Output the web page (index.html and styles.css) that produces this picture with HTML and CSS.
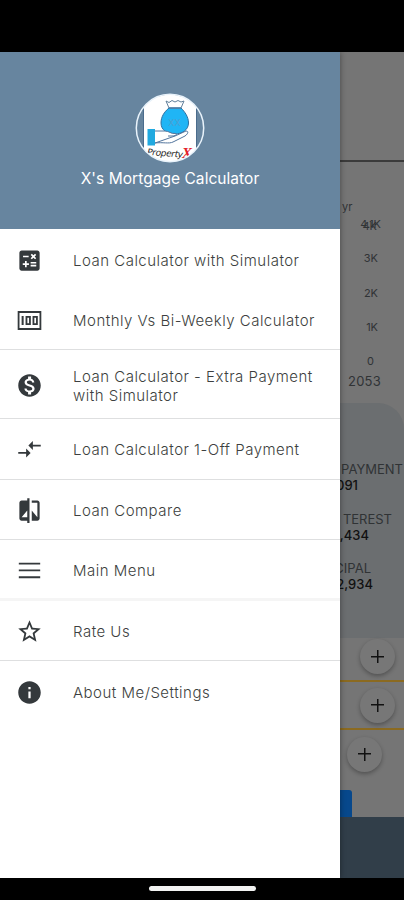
FILE: index.html
```html
<!DOCTYPE html>
<html lang="en">
<head>
    <meta charset="UTF-8">
    <meta name="viewport" content="width=device-width, initial-scale=1.0">
    <title>X's Mortgage Calculator</title>
    <link rel="stylesheet" href="styles.css">
</head>
<body>
    <div class="status-bar"></div>

    <div class="screen">
        <nav class="drawer">
            <div class="drawer-header">
                <svg class="logo" viewBox="0 0 70 70">
                    <defs>
                        <clipPath id="round"><circle cx="35" cy="35" r="33.5"/></clipPath>
                    </defs>
                    <g clip-path="url(#round)">
                        <rect x="9" width="52" height="70" fill="#fff"/>
                        <rect y="57" width="70" height="13" fill="#fff"/>
                        <path d="M8.5 10v47M61.5 10v47" stroke="#4b6c8c" stroke-width="1"/>
                        <path d="M34 15 C29 19 26 24 26 30 C26 37 32 41 39.500 41 C47 41 53.500 37 53.500 30 C53.500 24 50 19 46 15Z" fill="#20b5f5" stroke="#2f6f9f" stroke-width="1"/>
                        <path d="M34 15 L31 8 L34 9.500 L37 7.500 L40 9 L43 7.500 L46 9 L49 8 L46 15Z" fill="#fff" stroke="#62809b" stroke-width="1"/>
                        <path d="M34 15h12" stroke="#4b7fa8" stroke-width="1.500"/>
                        <rect x="12.500" y="36" width="7.500" height="16.500" fill="#20a9e0"/>
                        <path d="M20 38 H30 C34 38 36 41 40 40.500 C43 41 41 43 37 43 H33 M40 43 L51 38 C54 38 53 41 50 43 L38 49 C34 51 28 49 20 50Z" fill="#fff" stroke="#52749c" stroke-width="1"/>
                        <text x="39.500" y="33" text-anchor="middle" class="logo-bag">XX</text>
                        <text x="12" y="62" class="logo-name" textLength="36" transform="rotate(4 12 62)">Property</text>
                        <text x="47" y="65" class="logo-x">X</text>
                    </g>
                    <circle cx="35" cy="35" r="33.700" fill="none" stroke="#e9f3fb" stroke-width="1.500"/>
                </svg>
                <h1>X's Mortgage Calculator</h1>
            </div>

            <ul class="menu">
                <li>
                    <svg viewBox="0 0 24 24"><path fill-rule="evenodd" d="M19 3H5c-1.100 0-2 .9-2 2v14c0 1.100.9 2 2 2h14c1.100 0 2-.9 2-2V5c0-1.100-.9-2-2-2zm-5.970 4.060 1.060-1.060 1.410 1.410 1.410-1.410 1.060 1.060-1.410 1.410 1.410 1.420-1.060 1.060-1.410-1.410-1.410 1.410-1.060-1.060 1.410-1.420zM6.250 7.720h5v1.500h-5zM11.500 16h-2v2H8v-2H6v-1.500h2v-2h1.500v2h2zm6.500 1.250h-5v-1.500h5zm0-2.500h-5v-1.500h5z"/></svg>
                    <span>Loan Calculator with Simulator</span>
                </li>
                <li class="divided">
                    <svg viewBox="0 0 24 24"><path fill-rule="evenodd" d="M1.500 3.500v17h21v-17zm1.600 1.800h17.800v13.400H3.100z"/><path fill-rule="evenodd" d="M5 8h1.800v8H5zM8.500 8h4.700v8H8.500zm1.600 1.600v4.800h1.500V9.600zM14.700 8h4.700v8h-4.700zm1.600 1.600v4.800h1.500V9.600z"/></svg>
                    <span>Monthly Vs Bi-Weekly Calculator</span>
                </li>
                <li class="divided tall">
                    <svg viewBox="0 0 24 24"><path d="M12 2C6.480 2 2 6.480 2 12s4.480 10 10 10 10-4.480 10-10S17.520 2 12 2zm1.410 16.090V20h-2.670v-1.930c-1.710-.36-3.160-1.460-3.270-3.400h1.960c.1 1.050.82 1.870 2.650 1.870 1.960 0 2.400-.98 2.400-1.590 0-.83-.44-1.610-2.670-2.140-2.480-.6-4.180-1.620-4.180-3.670 0-1.720 1.390-2.840 3.110-3.210V4h2.670v1.950c1.860.45 2.790 1.860 2.850 3.390H14.300c-.05-1.110-.64-1.870-2.220-1.870-1.500 0-2.400.68-2.400 1.640 0 .84.65 1.390 2.670 1.910s4.180 1.390 4.180 3.910c-.01 1.830-1.380 2.830-3.120 3.160z" stroke="#34393c" stroke-width="0"/></svg>
                    <span>Loan Calculator - Extra Payment with Simulator</span>
                </li>
                <li class="divided">
                    <svg viewBox="0 0 24 24"><path d="M9.010 14.200H2v1.600h7.010V19L13 15l-3.990-4zM14.990 12.500V9.300H22V7.700h-7.010v-3.200L11 8.500z"/></svg>
                    <span>Loan Calculator 1-Off Payment</span>
                </li>
                <li class="divided">
                    <svg viewBox="0 0 24 24"><path d="M10 3H5c-1.100 0-2 .9-2 2v14c0 1.100.9 2 2 2h5v2h2V1h-2zm0 15H5l5-6zM19 3h-5v2h5v13l-5-6v9h5c1.100 0 2-.9 2-2V5c0-1.100-.9-2-2-2z"/></svg>
                    <span>Loan Compare</span>
                </li>
                <li class="divided soft">
                    <svg viewBox="0 0 24 24"><path d="M2.500 5h19v1.700h-19zM2.500 11.100h19v1.600h-19zM2.500 17.100h19v1.700h-19z"/></svg>
                    <span>Main Menu</span>
                </li>
                <li class="divided">
                    <svg viewBox="0 0 24 24"><path d="m22 9.240-7.190-.62L12 2 9.190 8.630 2 9.240l5.460 4.730L5.820 21 12 17.270 18.180 21l-1.630-7.030zM12 15.400l-3.760 2.270 1-4.280-3.320-2.880 4.380-.38L12 6.100l1.710 4.040 4.380.38-3.320 2.880 1 4.280z"/></svg>
                    <span>Rate Us</span>
                </li>
                <li>
                    <svg viewBox="0 0 24 24"><path d="M12 2C6.480 2 2 6.480 2 12s4.480 10 10 10 10-4.480 10-10S17.520 2 12 2zm1 15h-2v-6h2zm0-8h-2V7h2z"/></svg>
                    <span>About Me/Settings</span>
                </li>
            </ul>
        </nav>

        <main class="page">
            <div class="page-top"></div>
            <div class="chart">
                <span class="term">yr</span>
                <div class="axis">
                    <span class="peak">4.1K<b>4K</b></span>
                    <span>3K</span>
                    <span>2K</span>
                    <span>1K</span>
                    <span class="zero">0</span>
                </div>
                <span class="year">2053</span>
            </div>
            <div class="summary">
                <dl class="payment"><dt>PAYMENT</dt><dd>091</dd></dl>
                <dl class="interest"><dt>TEREST</dt><dd>,434</dd></dl>
                <dl class="principal"><dt>CIPAL</dt><dd>2,934</dd></dl>
            </div>
            <div class="adjust lined"><button class="plus"></button></div>
            <div class="adjust lined"><button class="plus"></button></div>
            <div class="adjust last"><button class="plus"></button></div>
            <div class="blue-btn"></div>
            <div class="page-footer"></div>
        </main>
    </div>

    <div class="nav-bar"><div class="handle"></div></div>
</body>
</html>
```

FILE: styles.css
```css
* {
    margin: 0;
    padding: 0;
    box-sizing: border-box;
}

body {
    width: 404px;
    height: 900px;
    display: flex;
    flex-direction: column;
    overflow: hidden;
    background: #000;
    font-family: Inter, Roboto, sans-serif;
}

.status-bar {
    height: 52px;
}

.screen {
    height: 826px;
    display: flex;
    overflow: hidden;
}

/* Drawer */
.drawer {
    width: 340px;
    flex-shrink: 0;
    background: #fff;
    box-shadow: 0 0 6px rgba(0,0,0,0.4);
    z-index: 1;
}

.drawer-header {
    height: 177px;
    background: #67859f;
    color: #fff;
    display: flex;
    flex-direction: column;
    align-items: center;
    padding-top: 41px;
}

.logo {
    width: 70px;
    height: 70px;
}

.logo-bag {
    font-size: 9px;
    fill: #4e9ed0;
}

.logo-name {
    font: italic 9px "DejaVu Sans", sans-serif;
    fill: #222;
}

.logo-x {
    font: italic bold 15px "Liberation Serif", serif;
    fill: #e3202b;
}

.drawer-header h1 {
    font-size: 15.500px;
    font-weight: 400;
    line-height: 20px;
    letter-spacing: 0.050px;
    margin-top: 6px;
}

.menu {
    list-style: none;
}

.menu li {
    height: 60.500px;
    display: flex;
    align-items: center;
    padding: 2px 20px 0 16px;
    color: #3d3f40;
    font-size: 15px;
    font-weight: 300;
    line-height: 19px;
    letter-spacing: 0.490px;
}

.menu li.divided {
    border-bottom: 1px solid #dedfe0;
}

.menu li.tall {
    height: 69px;
    padding-top: 3px;
}

.menu li.soft {
    border-bottom: 3px solid #f5f5f5;
    padding-top: 4px;
}

.menu svg {
    width: 27px;
    height: 27px;
    margin-right: 30px;
    flex-shrink: 0;
    fill: #34393c;
}

/* Dimmed page behind the drawer */
.page {
    width: 64px;
    background: #757575;
    color: #303335;
    overflow: hidden;
}

.page-top {
    height: 110px;
    border-bottom: 2px solid #3b3b3b;
}

.chart {
    height: 241px;
    padding-top: 38px;
    display: flex;
    flex-direction: column;
}

.term {
    font-size: 11px;
    line-height: 14px;
    padding-left: 2px;
}

.axis {
    display: flex;
    flex-direction: column;
    width: 38px;
    padding-top: 3px;
    font-size: 11px;
}

.axis span {
    height: 34.300px;
    line-height: 14px;
    text-align: right;
}

.axis .peak {
    position: relative;
    width: 41px;
}

.axis .peak b {
    position: absolute;
    right: 4px;
    top: 2px;
    font-weight: 400;
}

.axis .zero {
    height: 17px;
    padding-right: 4px;
}

.year {
    font-size: 13px;
    line-height: 20px;
    letter-spacing: 0.200px;
    padding-left: 8px;
}

.summary {
    height: 235px;
    padding-top: 58px;
    background: #6b6e70;
    border-top-right-radius: 26px;
    font-size: 13px;
    line-height: 16px;
}

.summary dl {
    height: 49.500px;
    display: flex;
    flex-direction: column;
    align-items: flex-end;
}

.summary dd {
    font-weight: 500;
    color: #111;
}

.payment {
    width: 63px;
}

.payment dd {
    margin-right: 45px;
}

.interest {
    width: 52px;
}

.interest dd {
    margin-right: 23px;
}

.principal {
    width: 33px;
}

.principal dt {
    margin-right: 2px;
}

.adjust {
    height: 48px;
    display: flex;
    align-items: center;
    padding-left: 20px;
}

.adjust:nth-child(4) {
    height: 44px;
    padding-bottom: 5px;
}

.adjust.lined {
    border-bottom: 2px solid #8b6a20;
}

.adjust.last {
    height: 60px;
    padding: 0 0 12px 7px;
}

.plus {
    width: 35px;
    height: 35px;
    flex-shrink: 0;
    border: none;
    border-radius: 50%;
    box-shadow: 0 2px 4px rgba(0,0,0,0.3);
    background:
        linear-gradient(#111, #111) center / 13px 1.500px no-repeat,
        linear-gradient(#111, #111) center / 1.500px 13px no-repeat,
        #777;
}

.blue-btn {
    width: 12px;
    height: 27px;
    background: #07488c;
    border-top-right-radius: 3px;
}

.page-footer {
    height: 61px;
    background: #313e49;
}

/* Gesture bar */
.nav-bar {
    height: 22px;
    display: flex;
    justify-content: center;
    padding-top: 8px;
}

.handle {
    width: 107px;
    height: 5px;
    border-radius: 3px;
    background: #f2f3f2;
}
```
